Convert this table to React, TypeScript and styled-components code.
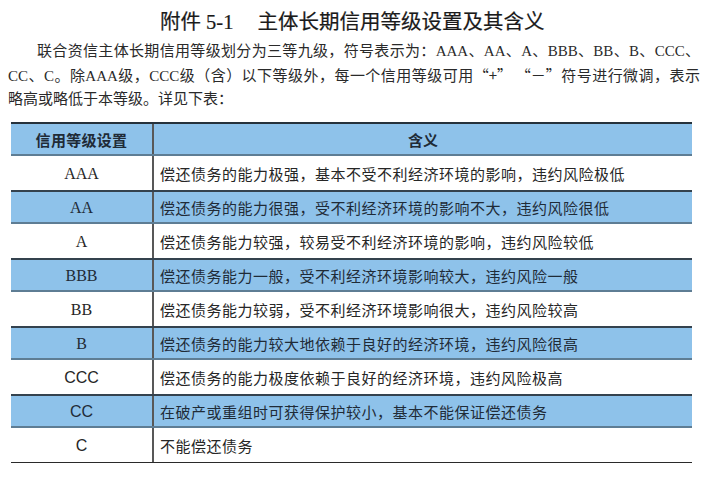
import styled, { createGlobalStyle } from "styled-components";

const GlobalStyle = createGlobalStyle`
    html, body {
        margin: 0;
        padding: 0;
        background: #ffffff;
    }
    body {
        font-family: "Liberation Serif", "Noto Sans CJK SC", serif;
        color: #222;
    }
`

type Grade = {
    code: string;
    meaning: string;
    sans?: boolean;
};

const grades: Grade[] = [
    {code: 'AAA', meaning: '偿还债务的能力极强，基本不受不利经济环境的影响，违约风险极低'},
    {code: 'AA', meaning: '偿还债务的能力很强，受不利经济环境的影响不大，违约风险很低'},
    {code: 'A', meaning: '偿还债务能力较强，较易受不利经济环境的影响，违约风险较低'},
    {code: 'BBB', meaning: '偿还债务能力一般，受不利经济环境影响较大，违约风险一般'},
    {code: 'BB', meaning: '偿还债务能力较弱，受不利经济环境影响很大，违约风险较高'},
    {code: 'B', meaning: '偿还债务的能力较大地依赖于良好的经济环境，违约风险很高'},
    {code: 'CCC', meaning: '偿还债务的能力极度依赖于良好的经济环境，违约风险极高', sans: true},
    {code: 'CC', meaning: '在破产或重组时可获得保护较小，基本不能保证偿还债务', sans: true},
    {code: 'C', meaning: '不能偿还债务', sans: true},
];

export default function App() {
    return (
        <>
            <GlobalStyle/>
            <Page>
                <Title>
                    <TitleNo>附件 5-1</TitleNo>
                    <span>主体长期信用等级设置及其含义</span>
                </Title>
                <Intro>
                    <IntroLine $first $justify>
                        联合资信主体长期信用等级划分为三等九级，符号表示为：AAA、AA、A、BBB、BB、B、CCC、
                    </IntroLine>
                    <IntroLine $justify>
                        CC、C。除AAA级，CCC级（含）以下等级外，每一个信用等级可用<Quote>“+” “－”</Quote>符号进行微调，表示
                    </IntroLine>
                    <IntroLine>略高或略低于本等级。详见下表：</IntroLine>
                </Intro>
                <Table>
                    <Row $shaded $head>
                        <CodeCell $head>信用等级设置</CodeCell>
                        <MeaningCell $head>含义</MeaningCell>
                    </Row>
                    {grades.map((g, i) => (
                        <Row key={g.code} $shaded={i % 2 === 1} $last={i === grades.length - 1}>
                            <CodeCell $sans={g.sans}>{g.code}</CodeCell>
                            <MeaningCell>{g.meaning}</MeaningCell>
                        </Row>
                    ))}
                </Table>
            </Page>
        </>
    );
}

const Page = styled.div`
    width: 710px;
    height: 490px;
    padding-top: 10px;
    box-sizing: border-box;
    overflow: hidden;
`

const Title = styled.h1`
    margin: 0;
    padding-left: 160px;
    height: 24px;
    line-height: 24px;
    font-size: 20.5px;
    font-weight: 400;
    color: #1a1a1a;
    white-space: nowrap;
    -webkit-text-stroke: 0.2px #1a1a1a;
`

const TitleNo = styled.span`
    margin-right: 24px;
`

const Intro = styled.div`
    margin: 6px 10px 0 8px;
    font-size: 15px;
    line-height: 23px;
    color: #2a2a2a;
`

const IntroLine = styled.div<{ $first?: boolean; $justify?: boolean }>`
    text-indent: ${p => (p.$first ? '29px' : '0')};
    text-align: ${p => (p.$justify ? 'justify' : 'left')};
    text-align-last: ${p => (p.$justify ? 'justify' : 'left')};
`

const Quote = styled.span`
    font-family: "Noto Sans CJK SC", sans-serif;
`

const Table = styled.div`
    margin: 11px 0 0 11px;
    width: 681px;
    border-top: 2px solid #26323c;
    border-bottom: 2px solid #2a2a2a;
`

const Row = styled.div<{ $shaded?: boolean; $head?: boolean; $last?: boolean }>`
    display: grid;
    grid-template-columns: 143px 1fr;
    box-sizing: border-box;
    height: ${p => (p.$head ? '32px' : '34px')};
    background: ${p => (p.$shaded ? '#8ec2ea' : '#ffffff')};
    color: ${p => (p.$shaded ? '#1f2b37' : '#262626')};
    border-top: ${p => (p.$shaded && !p.$head ? '2px solid #34424e' : 'none')};
    border-bottom: ${p => (p.$shaded ? '2px solid #5e7d94' : 'none')};
    margin-bottom: ${p => (p.$last ? '-1px' : '0')};
`

const CodeCell = styled.div<{ $sans?: boolean; $head?: boolean }>`
    display: flex;
    align-items: center;
    justify-content: center;
    border-right: 2px solid #585858;
    font-family: ${p => (p.$sans ? '"Liberation Sans", "Noto Sans CJK SC", sans-serif' : '"Liberation Serif", "Noto Sans CJK SC", serif')};
    font-size: ${p => (p.$head ? '15px' : '16px')};
    font-weight: ${p => (p.$head ? 700 : 400)};
    letter-spacing: ${p => (p.$head ? '0.3px' : '0')};
    padding-top: 1px;
`

const MeaningCell = styled.div<{ $head?: boolean }>`
    display: flex;
    align-items: center;
    justify-content: ${p => (p.$head ? 'center' : 'flex-start')};
    padding-left: ${p => (p.$head ? '0' : '6px')};
    font-family: "Noto Sans CJK SC", sans-serif;
    font-size: 15px;
    letter-spacing: ${p => (p.$head ? '0' : '0.5px')};
    font-weight: ${p => (p.$head ? 700 : 400)};
`
